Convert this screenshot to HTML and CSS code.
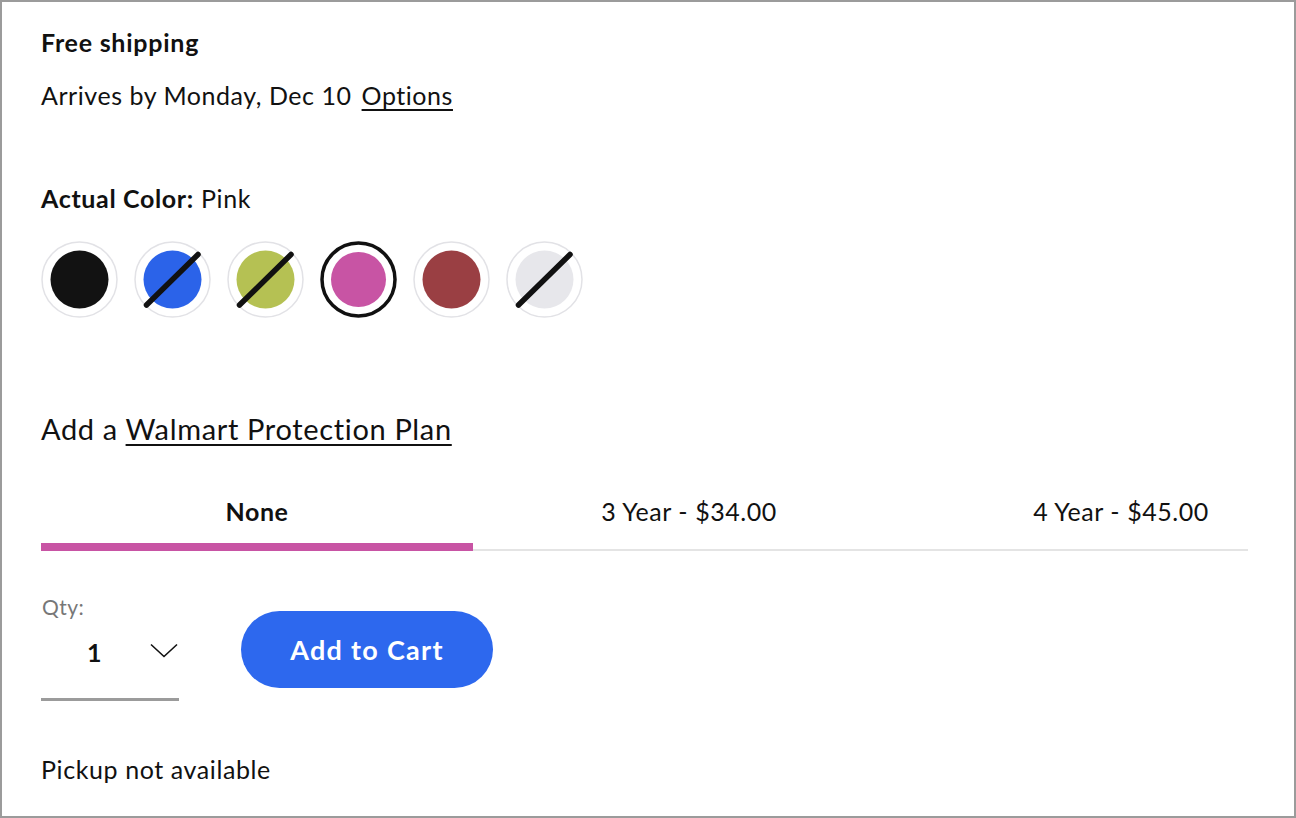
FILE: index.html
```html
<!DOCTYPE html>
<html lang="en">
<head>
<meta charset="utf-8">
<title>Product options</title>
<link rel="stylesheet" href="styles.css">
</head>
<body>
<div class="frame">
  <div class="free">Free shipping</div>
  <div class="arrives">Arrives by Monday, Dec 10 <a class="link" href="#">Options</a></div>

  <div class="color-label"><b>Actual Color:</b> Pink</div>
  <div class="swatches">
    <svg class="swatch" width="77" height="77" viewBox="0 0 77 77"><circle cx="38.5" cy="38.5" r="37.5" fill="#fff" stroke="#e2e2e6" stroke-width="1.5"/><circle cx="38.5" cy="38.5" r="29" fill="#121212"/></svg>
    <svg class="swatch" width="77" height="77" viewBox="0 0 77 77"><circle cx="38.5" cy="38.5" r="37.5" fill="#fff" stroke="#e2e2e6" stroke-width="1.5"/><circle cx="38.5" cy="38.5" r="29" fill="#2b63e9"/><line x1="12.5" y1="64" x2="64" y2="13.5" stroke="#111" stroke-width="5.5" stroke-linecap="round"/></svg>
    <svg class="swatch" width="77" height="77" viewBox="0 0 77 77"><circle cx="38.5" cy="38.5" r="37.5" fill="#fff" stroke="#e2e2e6" stroke-width="1.5"/><circle cx="38.5" cy="38.5" r="29" fill="#b5c153"/><line x1="12.5" y1="64" x2="64" y2="13.5" stroke="#111" stroke-width="5.5" stroke-linecap="round"/></svg>
    <svg class="swatch" width="77" height="77" viewBox="0 0 77 77"><circle cx="38.5" cy="38.5" r="36.5" fill="#fff" stroke="#111" stroke-width="3.5"/><circle cx="38.5" cy="38.5" r="27.5" fill="#c854a4"/></svg>
    <svg class="swatch" width="77" height="77" viewBox="0 0 77 77"><circle cx="38.5" cy="38.5" r="37.5" fill="#fff" stroke="#e2e2e6" stroke-width="1.5"/><circle cx="38.5" cy="38.5" r="29" fill="#9a3f43"/></svg>
    <svg class="swatch" width="77" height="77" viewBox="0 0 77 77"><circle cx="38.5" cy="38.5" r="37.5" fill="#fff" stroke="#e2e2e6" stroke-width="1.5"/><circle cx="38.5" cy="38.5" r="29" fill="#e7e7eb"/><line x1="12.5" y1="64" x2="64" y2="13.5" stroke="#111" stroke-width="5.5" stroke-linecap="round"/></svg>
  </div>

  <div class="plan-title">Add a <a class="link" href="#">Walmart Protection Plan</a></div>
  <div class="tabs">
    <div class="tab active">None</div>
    <div class="tab">3 Year - $34.00</div>
    <div class="tab">4 Year - $45.00</div>
  </div>

  <div class="buy-row">
    <div class="qty">
      <div class="qty-label">Qty:</div>
      <div class="qty-select">
        <span class="qty-value">1</span>
        <svg class="chev" width="28" height="15" viewBox="0 0 28 15"><polyline points="1,1.5 14,13.5 27,1.5" fill="none" stroke="#111" stroke-width="1.6"/></svg>
      </div>
    </div>
    <button class="cart-btn">Add to Cart</button>
  </div>

  <div class="pickup">Pickup not available</div>
</div>
</body>
</html>
```

FILE: styles.css
```css
html, body {
  margin: 0;
  padding: 0;
  background: #fff;
}

.frame {
  box-sizing: border-box;
  width: 1296px;
  height: 818px;
  border: 2px solid #9b9b9b;
  padding: 25px 46px 0 39px;
  font-family: "Lato", "Liberation Sans", sans-serif;
  color: #111;
  overflow: hidden;
}

.link {
  color: #111;
  text-decoration: underline;
  text-underline-offset: 4px;
  text-decoration-thickness: 1.5px;
}

.free {
  font-size: 25px;
  font-weight: 700;
  letter-spacing: 0.75px;
  line-height: 30px;
}

.arrives {
  margin-top: 23px;
  font-size: 25px;
  letter-spacing: 0.55px;
  line-height: 30px;
}

.arrives .link {
  margin-left: 3px;
}

.color-label {
  margin-top: 73px;
  font-size: 25px;
  letter-spacing: 0.65px;
  line-height: 30px;
}

.color-label b {
  font-weight: 700;
}

.swatches {
  margin-top: 28px;
  display: flex;
  gap: 16px;
  height: 77px;
}

.swatch {
  display: block;
  flex: none;
}

.plan-title {
  margin-top: 94px;
  font-size: 29px;
  letter-spacing: 0.65px;
  line-height: 34px;
}

.tabs {
  margin-top: 50px;
  display: flex;
  overflow: hidden;
  background: linear-gradient(#e4e4e4, #e4e4e4) left bottom / 100% 2px no-repeat;
}

.tab {
  flex: none;
  width: 432px;
  text-align: center;
  font-size: 25px;
  letter-spacing: 0.55px;
  line-height: 30px;
  padding-bottom: 17px;
  border-bottom: 8px solid transparent;
}

.tab.active {
  font-weight: 700;
  border-bottom-color: #c854a4;
}

.buy-row {
  margin-top: 44px;
  display: flex;
  align-items: flex-start;
  gap: 62px;
}

.qty {
  width: 138px;
  border-bottom: 3px solid #9b9b9b;
  padding-bottom: 31px;
}

.qty-label {
  font-size: 21px;
  letter-spacing: 0.5px;
  line-height: 24px;
  color: #777;
  padding-left: 1px;
}

.qty-select {
  margin-top: 18px;
  display: flex;
  align-items: center;
  height: 30px;
}

.qty-value {
  font-size: 25px;
  font-weight: 700;
  line-height: 30px;
  margin-left: 46px;
  width: 63px;
}

.chev {
  display: block;
  margin-top: -3px;
}

.cart-btn {
  margin-top: 16px;
  width: 252px;
  height: 77px;
  border: none;
  border-radius: 39px;
  background: #2d68ee;
  color: #fff;
  font-family: "Lato", "Liberation Sans", sans-serif;
  font-size: 27px;
  font-weight: 700;
  letter-spacing: 1.3px;
  cursor: pointer;
}

.pickup {
  margin-top: 53px;
  font-size: 25px;
  letter-spacing: 0.6px;
  line-height: 30px;
}
```
